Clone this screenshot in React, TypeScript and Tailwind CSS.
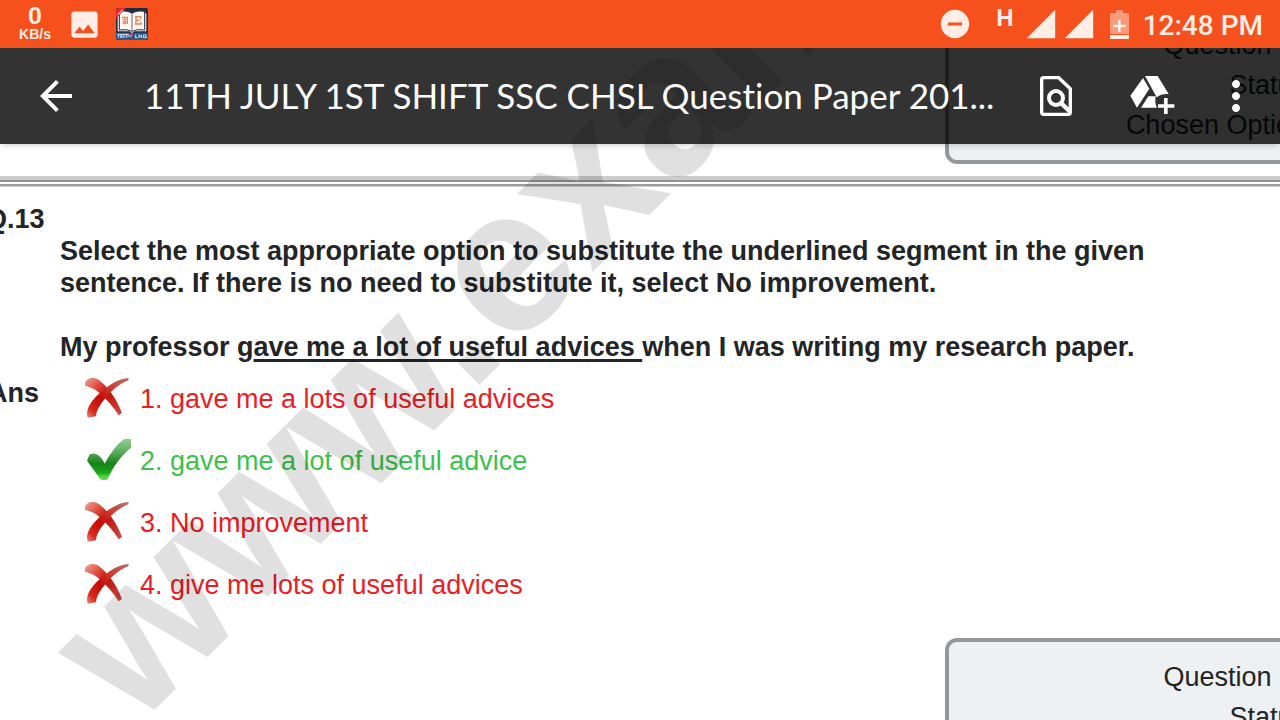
import {
  MdArrowBack,
  MdDoNotDisturbOn,
  MdImage,
  MdMoreVert,
  MdSignalCellular4Bar,
} from "react-icons/md";

type Option = { text: string; correct: boolean };

const options: Option[] = [
  { text: "1. gave me a lots of useful advices", correct: false },
  { text: "2. gave me a lot of useful advice", correct: true },
  { text: "3. No improvement", correct: false },
  { text: "4. give me lots of useful advices", correct: false },
];

function CrossMark() {
  return (
    <svg viewBox="0 0 144 132" className="mt-0.5 h-11 w-12 shrink-0" role="img" aria-label="Wrong">
      <defs>
        <linearGradient id="cross-fall" x1="0" y1="0" x2="1" y2="1">
          <stop offset="0" stopColor="#f0a59c" />
          <stop offset="0.3" stopColor="#dc4437" />
          <stop offset="0.5" stopColor="#c40d08" />
          <stop offset="1" stopColor="#c9524b" />
        </linearGradient>
        <linearGradient id="cross-rise" x1="1" y1="0" x2="0" y2="1">
          <stop offset="0" stopColor="#b9716c" />
          <stop offset="0.35" stopColor="#cc3a30" />
          <stop offset="0.6" stopColor="#c40a06" />
          <stop offset="0.85" stopColor="#d82a1c" />
          <stop offset="1" stopColor="#eb8a80" />
        </linearGradient>
      </defs>
      <path d="M3 18C7 3 28 -1 44 8C72 30 98 64 114 108L104 115C88 88 68 67 45 47C32 34 18 31 3 26Z" fill="url(#cross-fall)" />
      <path d="M134 3L133 10C106 20 78 44 60 69C44 88 37 103 36 118L11 122C4 98 18 76 42 53C68 28 100 5 134 3Z" fill="url(#cross-rise)" />
    </svg>
  );
}

function CheckMark() {
  return (
    <svg viewBox="0 0 144 132" className="mt-0.5 h-11 w-12 shrink-0" role="img" aria-label="Correct">
      <defs>
        <linearGradient id="check-fill" x1="0" y1="0" x2="0" y2="1">
          <stop offset="0" stopColor="#8fcf92" />
          <stop offset="0.3" stopColor="#5fae60" />
          <stop offset="0.6" stopColor="#168218" />
          <stop offset="0.82" stopColor="#1da51a" />
          <stop offset="0.93" stopColor="#48e236" />
          <stop offset="1" stopColor="#7fb87c" />
        </linearGradient>
      </defs>
      <path d="M141 0L120 0C97 17 80 42 62 74C52 51 32 37 16 47L9 65C24 85 38 105 48 119C55 124 65 124 72 119C85 85 112 49 141 26Z" fill="url(#check-fill)" />
    </svg>
  );
}

function DictionaryIcon() {
  return (
    <svg viewBox="0 0 96 96" className="h-8 w-8" role="img" aria-label="Dictionary">
      <rect width="96" height="96" rx="5" fill="#232a42" />
      <rect y="74" width="96" height="22" rx="4" fill="#27598f" />
      <path d="M5 16H91V70H56L48 75L40 70H5Z" fill="#f4efec" />
      <path d="M10 10Q34 6 48 16Q62 6 86 10V66Q62 62 48 70Q34 62 10 66Z" fill="#fff6f1" stroke="#27304a" strokeWidth="3" />
      <path d="M48 16V70" stroke="#8d8f99" strokeWidth="4" />
      <path d="M18 28H36M34 28V48M20 34Q30 30 28 38Q27 43 20 40M24 39Q32 42 28 47L20 45" fill="none" stroke="#ee8352" strokeWidth="4" />
      <path d="M57 26H74V32M60 26V48M56 48H75V42M60 37H70" fill="none" stroke="#ee8352" strokeWidth="4" />
      <path d="M0 22V10Q0 0 10 0H30L0 32Z" fill="#e5272b" />
      <path d="M5 20L20 5" stroke="#ffaaa5" strokeWidth="4" />
      <path d="M4 79H38M7 79V89M13 82V89L18 82V90M24 79V90M31 79V89M34 84H48M59 90V80M59 89H65M69 90V80L76 89V80M91 81H82V89H91V85H87" fill="none" stroke="#d6e3f2" strokeWidth="3" />
      <path d="M40 80H52" stroke="#c94756" strokeWidth="4" />
    </svg>
  );
}

function BatteryIcon() {
  return (
    <svg viewBox="0 0 57 87" className="h-[29px] w-[19px]" role="img" aria-label="Battery charging">
      <path d="M18 0H39V9H57V72H0V9H18Z" fill="#fb9a78" />
      <path d="M0 75H57V87H0Z" fill="#ffede6" />
      <path d="M28 30V66M10 48H47" stroke="#ffede6" strokeWidth="8" />
    </svg>
  );
}

function FindInPageIcon() {
  return (
    <svg viewBox="0 0 144 144" className="size-12" fill="none" stroke="currentColor" aria-hidden="true">
      <path d="M34 17H80L115 50V121Q115 127 109 127H35Q29 127 29 121V23Q29 17 35 17Z" strokeWidth="10" />
      <circle cx="72" cy="78" r="21" strokeWidth="12" />
      <path d="M86 92L115 120" strokeWidth="13" />
    </svg>
  );
}

function AddToDriveIcon() {
  return (
    <svg viewBox="0 0 144 144" className="size-12" fill="currentColor" aria-hidden="true">
      <path d="M45 18L64 50L27 107L7 71Z" />
      <path d="M51 12H89L122 66Q100 64 86 76Z" />
      <path d="M61 73L83 73Q79 92 87 107H39Z" />
      <path d="M108 78H119V97H139V107H119V126H108V107H90V97H108Z" />
    </svg>
  );
}

function StatusBar() {
  return (
    <div className="flex h-12 items-center justify-between bg-[#f6511d] pl-[18px] pr-[17px] text-[#ffede6]">
      <div className="flex items-center">
        <div className="flex w-[34px] flex-col items-center">
          <span className="font-['Roboto',sans-serif] text-2xl leading-5 font-bold">0</span>
          <span className="text-sm leading-4 font-bold">KB/s</span>
        </div>
        <MdImage className="ml-[15px] size-[35px]" />
        <div className="ml-3.5">
          <DictionaryIcon />
        </div>
      </div>
      <div className="flex items-center">
        <MdDoNotDisturbOn className="size-[34px]" />
        <span className="ml-6 -mt-3 text-2xl leading-6 font-bold">H</span>
        <MdSignalCellular4Bar className="ml-2.5 size-[34px]" />
        <MdSignalCellular4Bar className="ml-1 size-[34px]" />
        <div className="ml-3.5">
          <BatteryIcon />
        </div>
        <time className="ml-3.5 pt-1 font-['Roboto',sans-serif] text-[28px] leading-8 font-medium">12:48 PM</time>
      </div>
    </div>
  );
}

function Toolbar() {
  return (
    <header className="flex h-24 items-center bg-black/80 pr-5 pl-8 text-white shadow-md">
      <button type="button" aria-label="Back" className="shrink-0">
        <MdArrowBack className="size-12" />
      </button>
      <h1 className="ml-16 grow pb-0.5 font-['Lato',sans-serif] text-[35px] whitespace-nowrap [font-variant-ligatures:none]">
        11TH JULY 1ST SHIFT SSC CHSL Question Paper 201...
      </h1>
      <div className="flex shrink-0 items-center gap-12">
        <button type="button" aria-label="Find in document">
          <FindInPageIcon />
        </button>
        <button type="button" aria-label="Add to Drive">
          <AddToDriveIcon />
        </button>
        <button type="button" aria-label="More options" className="-ml-3">
          <MdMoreVert className="size-12" />
        </button>
      </div>
    </header>
  );
}

function DetailsCard() {
  return (
    <div className="flex justify-end">
      <div className="-mr-36 w-[479px] shrink-0 rounded-xl border-4 border-[#95989a] bg-[#edf1f4] py-[15px] pr-[99px] text-right leading-10">
        <p>Question ID :</p>
        <p>Status :</p>
        <p>Chosen Option :</p>
      </div>
    </div>
  );
}

function Divider() {
  return (
    <div className="mt-3">
      <div className="h-1 bg-[#cdcdcd]" />
      <div className="h-0.5 bg-[#929292]" />
      <div className="h-0.5 bg-white" />
      <div className="h-0.5 bg-[#9c9c9c]" />
      <div className="h-px bg-[#cfcfcf]" />
    </div>
  );
}

export default function App() {
  return (
    <div className="relative h-screen overflow-hidden bg-white font-['Liberation_Sans',Arial,sans-serif] text-[27px] text-[#222426]">
      <main className="relative pt-1.5">
        <DetailsCard />
        <Divider />
        <section className="mt-4 leading-8">
          <h2 className="-ml-3.5 font-bold">Q.13</h2>
          <div className="ml-[60px] font-bold whitespace-nowrap">
            <p>
              Select the most appropriate option to substitute the underlined segment in the given
              <br />
              sentence. If there is no need to substitute it, select No improvement.
            </p>
            <p className="mt-8">
              My professor g
              <span className="underline decoration-[3px] underline-offset-[3px]">ave me a lot of useful advices </span>
              when I was writing my research paper.
            </p>
          </div>
          <div className="mt-1 flex">
            <h3 className="-ml-3 w-24 pt-2.5 font-bold">Ans</h3>
            <ul>
              {options.map((option) => (
                <li key={option.text} className="flex h-[62px] items-center gap-2">
                  {option.correct ? <CheckMark /> : <CrossMark />}
                  <span className={option.correct ? "pt-0.5 text-[#3cc14c]" : "pt-0.5 text-[#ec1c24]"}>{option.text}</span>
                </li>
              ))}
            </ul>
          </div>
        </section>
        <div className="mt-[23px]">
          <DetailsCard />
        </div>
        <div
          aria-hidden="true"
          className="pointer-events-none absolute top-[555px] left-[136px] origin-[0px_175px] -rotate-45 text-[206px] leading-none font-bold whitespace-nowrap text-black/12"
        >
          www.exam
        </div>
      </main>
      <div className="absolute inset-x-0 top-0">
        <StatusBar />
        <Toolbar />
      </div>
    </div>
  );
}
